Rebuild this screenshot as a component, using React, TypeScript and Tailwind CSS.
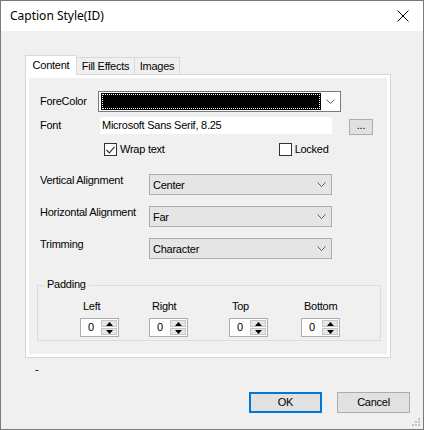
import React from "react";

const Chevron = () => (
  <svg width="9" height="5" viewBox="0 0 9 5">
    <path d="M0.5 0.5 L4.5 4.5 L8.5 0.5" fill="none" stroke="#606060" strokeWidth="1" />
  </svg>
);

function Combo({ value }: { value: string }) {
  return (
    <div className="flex h-[21px] w-[183px] items-center border border-[#adadad] bg-[#e5e5e5]">
      <span className="flex-1 pl-[3px] pt-[2px] text-[11px] text-black">{value}</span>
      <span className="mr-[5px] flex items-center">
        <Chevron />
      </span>
    </div>
  );
}

function Spin() {
  return (
    <div className="flex h-[19px] w-[39px] border border-[#adadad] bg-white">
      <div className="flex-1 pl-[7px] text-[11px] leading-[17px] text-black">0</div>
      <div className="my-[1px] mr-[1px] flex w-[16px] flex-col gap-[1px]">
        <div className="flex flex-1 items-center justify-center border border-[#c4c4c4] bg-[#e6e6e6]">
          <svg width="7" height="4" viewBox="0 0 7 4">
            <path d="M3.5 0 L7 4 L0 4Z" fill="#000" />
          </svg>
        </div>
        <div className="flex flex-1 items-center justify-center border border-[#c4c4c4] bg-[#e6e6e6]">
          <svg width="7" height="4" viewBox="0 0 7 4">
            <path d="M0 0 L7 0 L3.5 4Z" fill="#000" />
          </svg>
        </div>
      </div>
    </div>
  );
}

function PadItem({ label }: { label: string }) {
  return (
    <div className="flex w-[40px] flex-col">
      <span className="pl-[3px] text-[11px] leading-[13px] text-black">{label}</span>
      <div className="mt-[5px]">
        <Spin />
      </div>
    </div>
  );
}

export default function App() {
  return (
    <div className="flex h-[430px] w-[424px] flex-col border border-[#7a7a7a] bg-[#f0f0f0] font-['Liberation_Sans',Arial,sans-serif] tracking-[-0.25px] text-black">
      {/* title bar */}
      <div className="flex h-[30px] shrink-0 items-center bg-white pl-[9px] pr-[14px] tracking-normal">
        <span className="flex-1 font-['Noto_Sans',sans-serif] text-[12px] text-black">Caption Style(ID)</span>
        <svg width="12" height="12" viewBox="0 0 12 12">
          <path d="M0.5 0.5 L11.5 11.5 M11.5 0.5 L0.5 11.5" stroke="#000" strokeWidth="1" />
        </svg>
      </div>

      {/* body */}
      <div className="flex flex-1 flex-col pl-[24px] pt-[24px]">
        {/* tab strip */}
        <div className="relative z-10 flex h-[19px] items-end">
          <div className="-mb-px flex h-[20px] w-[52px] items-start justify-center border border-b-0 border-[#d9d9d9] bg-white pt-[1px] text-[11px]">
            Content
          </div>
          <div className="flex h-[17px] w-[58px] items-center justify-center border border-l-0 border-b-0 border-[#d9d9d9] bg-[#f0f0f0] pt-[1px] text-[11px]">
            Fill Effects
          </div>
          <div className="flex h-[17px] w-[45px] items-center justify-center border border-l-0 border-b-0 border-[#d9d9d9] bg-[#f0f0f0] pt-[1px] text-[11px]">
            Images
          </div>
        </div>

        {/* panel */}
        <div className="h-[284px] w-[366px] border border-[#d9d9d9] bg-white p-[3px]">
          <div className="flex h-full flex-col bg-[#f0f0f0] pl-[11px] text-[11px]">
            {/* ForeColor */}
            <div className="mt-[13px] flex h-[21px] items-center">
              <span className="w-[58px]">ForeColor</span>
              <div className="flex h-[21px] w-[243px] items-center border border-[#7a7a7a] bg-white pl-[3px]">
                <div className="h-[15px] w-[218px] border border-dotted border-white bg-black outline outline-1 outline-black" />
                <span className="ml-auto mr-[5px] flex items-center">
                  <Chevron />
                </span>
              </div>
            </div>
            {/* Font */}
            <div className="mt-[5px] flex h-[17px] items-center">
              <span className="w-[60px]">Font</span>
              <div className="flex h-[17px] w-[232px] items-center bg-white pl-[2px]">Microsoft Sans Serif, 8.25</div>
              <div className="ml-[17px] mt-[3px] flex h-[16px] w-[24px] items-center justify-center border border-[#adadad] bg-[#e1e1e1] pb-[4px] text-[11px]">
                ...
              </div>
            </div>
            {/* checkboxes */}
            <div className="mt-[9px] flex h-[13px] items-center">
              <div className="ml-[64px] flex h-[13px] w-[13px] items-center justify-center border border-[#333] bg-white">
                <svg width="9" height="8" viewBox="0 0 9 8">
                  <path d="M0.5 4 L3.3 6.8 L8.5 0.8" fill="none" stroke="#333" strokeWidth="1.2" />
                </svg>
              </div>
              <span className="ml-[3px]">Wrap text</span>
              <div className="ml-[114px] h-[13px] w-[13px] border border-[#333] bg-white" />
              <span className="ml-[3px]">Locked</span>
            </div>
            {/* alignment rows */}
            <div className="mt-[18px] flex h-[21px] items-start">
              <span className="-mt-[2px] w-[109px]">Vertical Alignment</span>
              <Combo value="Center" />
            </div>
            <div className="mt-[11px] flex h-[21px] items-start">
              <span className="-mt-[2px] w-[109px]">Horizontal Alignment</span>
              <Combo value="Far" />
            </div>
            <div className="mt-[11px] flex h-[21px] items-start">
              <span className="-mt-[2px] w-[109px]">Trimming</span>
              <Combo value="Character" />
            </div>
            {/* padding group */}
            <div className="relative ml-[-3px] mt-[26px] h-[56px] w-[344px] border border-[#dcdcdc]">
              <span className="absolute left-[6px] top-[-8px] bg-[#f0f0f0] px-[3px] leading-[13px]">Padding</span>
              <div className="flex pl-[42px] pt-[14px]">
                <PadItem label="Left" />
                <div className="ml-[29px]">
                  <PadItem label="Right" />
                </div>
                <div className="ml-[40px]">
                  <PadItem label="Top" />
                </div>
                <div className="ml-[32px]">
                  <PadItem label="Bottom" />
                </div>
              </div>
            </div>
          </div>
        </div>

        {/* dash */}
        <div className="ml-[10px] mt-[5px] h-[12px] text-[11px] leading-[12px]">-</div>

        {/* buttons */}
        <div className="mt-[17px] flex">
          <div className="ml-[224px] flex h-[21px] w-[73px] items-center justify-center border-2 border-[#0078d7] bg-[#e1e1e1] text-[11px]">
            OK
          </div>
          <div className="ml-[15px] flex h-[21px] w-[73px] items-center justify-center border border-[#adadad] bg-[#e1e1e1] text-[11px]">
            Cancel
          </div>
        </div>
        <div className="mt-auto flex justify-end pb-[2px] pr-[2px]">
          <svg width="9" height="9" viewBox="0 0 9 9">
            <rect x="6" y="0" width="2" height="2" fill="#c4c4c4" />
            <rect x="3" y="3" width="2" height="2" fill="#c4c4c4" />
            <rect x="6" y="3" width="2" height="2" fill="#c4c4c4" />
            <rect x="0" y="6" width="2" height="2" fill="#c4c4c4" />
            <rect x="3" y="6" width="2" height="2" fill="#c4c4c4" />
            <rect x="6" y="6" width="2" height="2" fill="#c4c4c4" />
          </svg>
        </div>
      </div>
    </div>
  );
}
